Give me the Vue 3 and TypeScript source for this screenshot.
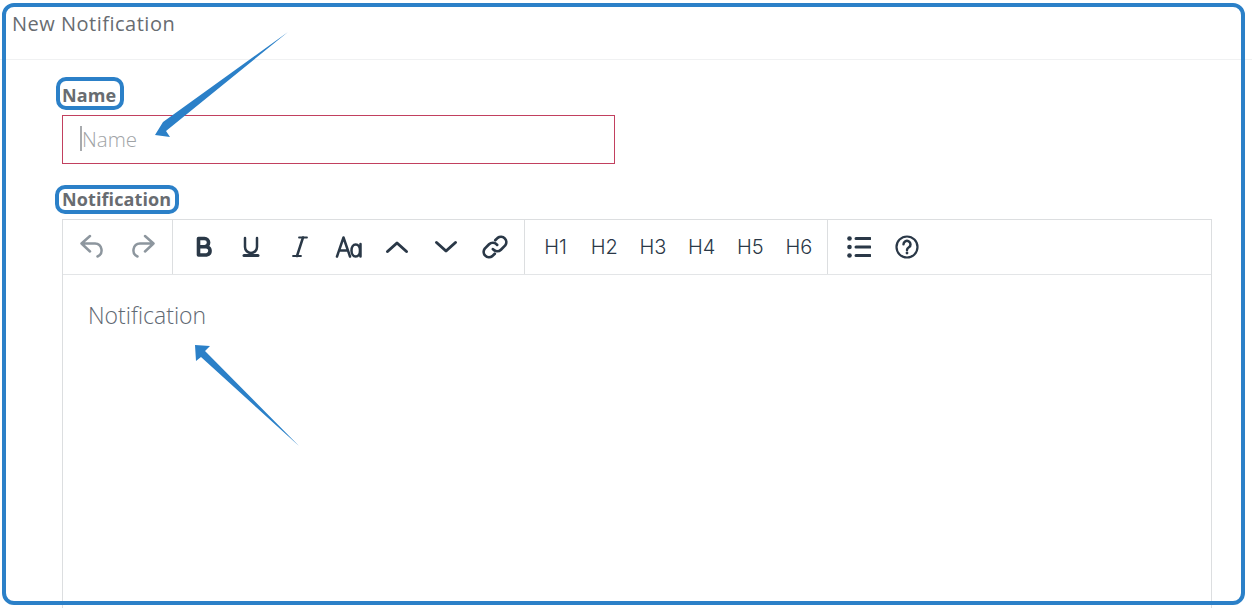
<script setup lang="ts">
const headings: string[] = ["H1", "H2", "H3", "H4", "H5", "H6"];
</script>

<template>
	<div class="page">
		<div class="header">New Notification</div>
		<div class="form">
			<label class="label label-name"><span class="ring">Name</span></label>
			<div class="input"><span class="caret"></span>Name</div>
			<label class="label label-notification"><span class="ring">Notification</span></label>
			<div class="editor">
				<div class="toolbar">
					<div class="group group-history">
						<button class="tool muted">
							<svg width="26" height="26" viewBox="0 0 26 26"><path class="mid" d="M11 2 2.500 9.500l8.500 8M2.500 9.500H16a6.800 6.800 0 0 1 2.500 13" /></svg>
						</button>
						<button class="tool muted">
							<svg width="26" height="26" viewBox="0 0 26 26"><path class="mid" d="M15 2l8.500 7.500-8.500 8M23.500 9.500H10a6.800 6.800 0 0 0-2.500 13" /></svg>
						</button>
					</div>
					<div class="group">
						<button class="tool">
							<svg width="24" height="24" viewBox="0 0 24 24"><path class="heavy" d="M7.500 3.500h6a4 4 0 0 1 0 8.200h-6zm0 8.200h8a4.200 4.200 0 0 1 0 8.300h-8z" /></svg>
						</button>
						<button class="tool">
							<svg width="24" height="24" viewBox="0 0 24 24"><path class="mid" d="M6 3v9a6 6 0 0 0 12 0V3" /><path class="thick" d="M5 20.500h14" /></svg>
						</button>
						<button class="tool">
							<svg width="24" height="24" viewBox="0 0 24 24"><path class="thin" d="M11 2.500h8M5 21h8" /><path class="mid" d="M15 2.500 9 21" /></svg>
						</button>
						<button class="tool">
							<svg width="28" height="24" viewBox="0 0 28 24"><path class="mid" d="M2 21.500 8.500 2.500l6.500 19M4 15.500h9" /><path class="mid" d="M25.500 9v12.500M25 15.500c0-3.500-1.800-6-4.300-6s-4.200 2.700-4.200 6 1.700 6 4.200 6 4.300-2.500 4.300-6z" /></svg>
						</button>
						<button class="tool">
							<svg width="26" height="24" viewBox="0 0 26 24"><path class="thick" d="M3.500 16.500 13 8l9.500 8.500" /></svg>
						</button>
						<button class="tool">
							<svg width="26" height="24" viewBox="0 0 26 24"><path class="thick" d="M3.500 7.500 13 16l9.500-8.500" /></svg>
						</button>
						<button class="tool">
							<svg width="28" height="28" viewBox="0 0 26 26"><path class="mid" d="M11 15a5 5 0 0 0 7.500.500l4-4a5 5 0 0 0-7-7l-2.300 2.300" /><path class="mid" d="M15 11a5 5 0 0 0-7.500-.500l-4 4a5 5 0 0 0 7 7l2.300-2.300" /></svg>
						</button>
					</div>
					<div class="group group-headings">
						<button v-for="h in headings" :key="h" class="tool heading">{{ h }}</button>
					</div>
					<div class="group group-extra">
						<button class="tool">
							<svg width="24" height="24" viewBox="0 0 24 24"><path class="thick" d="M9 3.500h14M9 12h14M9 20.500h14" /><circle cx="2.500" cy="3.500" r="2.300" /><circle cx="2.500" cy="12" r="2.300" /><circle cx="2.500" cy="20.500" r="2.300" /></svg>
						</button>
						<button class="tool">
							<svg width="24" height="24" viewBox="0 0 24 24"><circle class="ring-line" cx="12" cy="12" r="10.500" /><path class="mid" d="M8.500 9.300a3.500 3.500 0 1 1 5.400 3c-1.200.800-1.900 1.400-1.900 2.700" /><circle cx="12" cy="18" r="1.400" /></svg>
						</button>
					</div>
				</div>
				<div class="content">Notification</div>
			</div>
		</div>

		<!-- annotations drawn on top of the screenshot -->
		<div class="frame"></div>
		<svg class="arrows" width="1252" height="608" viewBox="0 0 1252 608">
			<polygon points="288,32 163,122 155,135 170,137 166,131" />
			<polygon points="299,446 205,351 210,346 195,345 196,361 201,357" />
		</svg>
	</div>
</template>

<style>
html,
body {
	margin: 0;
	padding: 0;
	background: #fff;
	overflow: hidden;
}
</style>

<style scoped>
.page {
	position: relative;
	width: 1252px;
	height: 608px;
	overflow: hidden;
	background: #fff;
	font-family: "Open Sans", "Liberation Sans", sans-serif;
}
.header {
	box-sizing: border-box;
	height: 60px;
	padding: 12px 0 0 12px;
	border-bottom: 1px solid #f0f1f2;
	color: #686c71;
	font-size: 20px;
	letter-spacing: 0.5px;
	line-height: 24px;
	font-weight: 500;
}
.form {
	padding: 0 40px 0 62px;
}
.label {
	display: block;
	color: #686c71;
	font-size: 18px;
	letter-spacing: 0.1px;
	font-weight: 700;
	line-height: 22px;
}
.label-name,
.label-notification {
	padding-top: 24px;
	height: 31px;
}
.ring {
	position: relative;
	display: inline-block;
}
.ring::after {
	content: "";
	position: absolute;
	border: 4px solid #2b80c8;
	border-radius: 10px;
}
.label-name .ring::after {
	left: -6px;
	right: -8px;
	top: -7px;
	bottom: -4px;
}
.label-notification .ring::after {
	left: -7px;
	right: -8px;
	top: -3px;
	bottom: -4px;
}
.input {
	box-sizing: border-box;
	display: flex;
	align-items: center;
	width: 553px;
	height: 49px;
	padding: 0 0 2px 17px;
	border: 1px solid #c2405f;
	color: #a0a3a6;
	font-size: 20.500px;
	font-weight: 300;
}
.caret {
	width: 2px;
	height: 25px;
	background: #a8abae;
}
.editor {
	box-sizing: border-box;
	width: 1150px;
	height: 400px;
	border: 1px solid #dcdee0;
}
.toolbar {
	display: flex;
	height: 54px;
	border-bottom: 1px solid #e3e5e7;
}
.group {
	display: flex;
	padding: 0 5.200px;
	border-right: 1px solid #dcdee0;
}
.group:last-child {
	border-right: none;
}
.group-history {
	padding: 0 3.500px;
}
.group-history .tool {
	width: 51px;
}
.group-headings {
	padding: 0 3.800px 0 6px;
}
.group-extra {
	padding-left: 6.200px;
}
.tool {
	display: flex;
	align-items: center;
	justify-content: center;
	width: 48.700px;
	padding: 0;
	border: none;
	background: none;
	color: #2a3847;
}
.tool svg {
	fill: none;
	stroke: currentColor;
	stroke-width: 2;
	stroke-linecap: round;
	stroke-linejoin: round;
}
.tool svg circle {
	fill: currentColor;
	stroke: none;
}
.tool svg circle.ring-line {
	fill: none;
	stroke: currentColor;
	stroke-width: 2.200;
}
.tool svg .mid {
	stroke-width: 2.500;
}
.tool svg .thick {
	stroke-width: 3;
}
.tool svg .heavy {
	stroke-width: 3.600;
}
.tool svg .thin {
	stroke-width: 1.800;
}
.muted {
	color: #8d969e;
}
.heading {
	font-family: "Inter", "Liberation Sans", sans-serif;
	font-size: 20px;
	font-weight: 300;
}
.content {
	padding: 25px 25px;
	color: #5f6973;
	font-family: "Open Sans", "Liberation Sans", sans-serif;
	font-size: 23px;
	line-height: 30px;
	font-weight: 300;
}
.frame {
	position: absolute;
	left: 2px;
	top: 3px;
	width: 1243px;
	height: 602px;
	box-sizing: border-box;
	border: 4px solid #2b80c8;
	border-radius: 12px;
}
.arrows {
	position: absolute;
	left: 0;
	top: 0;
	fill: #2b80c8;
}
</style>
